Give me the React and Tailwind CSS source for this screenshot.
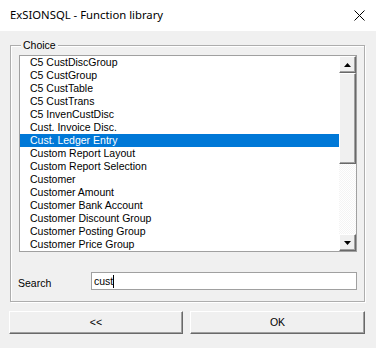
import { useState } from "react";

const items = [
  "C5 CustDiscGroup",
  "C5 CustGroup",
  "C5 CustTable",
  "C5 CustTrans",
  "C5 InvenCustDisc",
  "Cust. Invoice Disc.",
  "Cust. Ledger Entry",
  "Custom Report Layout",
  "Custom Report Selection",
  "Customer",
  "Customer Amount",
  "Customer Bank Account",
  "Customer Discount Group",
  "Customer Posting Group",
  "Customer Price Group",
];

const Arrow = ({ down }) => (
  <svg width="7" height="4" viewBox="0 0 7 4">
    {down ? <polygon points="0,0 7,0 3.5,4" fill="#000" /> : <polygon points="3.5,0 7,4 0,4" fill="#000" />}
  </svg>
);

const raised =
  "bg-[#f0f0f0] border border-t-white border-l-white border-r-[#696969] border-b-[#696969] shadow-[inset_-1px_-1px_0_#a0a0a0]";

const App = () => {
  const [selected, setSelected] = useState(6);
  const [search, setSearch] = useState("cust");

  return (
    <div className="w-[376px] h-[348px] bg-[#f0f0f0] flex flex-col font-['Liberation_Sans',Arial,sans-serif] text-[10.5px] text-black">
      {/* title bar */}
      <div className="h-[31px] bg-white flex items-center justify-between pl-[10px] pr-[11px]">
        <span className="font-['Noto_Sans',sans-serif] text-[11.3px]">ExSIONSQL - Function library</span>
        <svg width="11" height="11" viewBox="0 0 11 11">
          <path d="M0.5 0.5 L10.5 10.5 M10.5 0.5 L0.5 10.5" stroke="#000" strokeWidth="1" />
        </svg>
      </div>

      {/* group box */}
      <div className="mt-[14px] ml-[10px] w-[355px] h-[257px] border border-[#adadad] shadow-[inset_1px_1px_0_#fff,1px_1px_0_#fff] pl-[8px] flex flex-col items-start">
        <span className="-mt-[7px] ml-[2px] px-[2px] h-[12px] bg-[#f0f0f0] leading-[12px]">Choice</span>

        {/* list box */}
        <div className="mt-[4px] w-[338px] h-[197px] border border-[#a0a0a0] bg-white flex">
          <ul className="w-[319px]">
            {items.map((it, i) => (
              <li
                key={it}
                onClick={() => setSelected(i)}
                className={`h-[13px] leading-[13px] pl-[10px] whitespace-nowrap ${
                  i === selected ? "bg-[#0078d7] text-white" : ""
                }`}
              >
                {it}
              </li>
            ))}
          </ul>
          <div className="w-[17px] flex flex-col">
            <div className={`h-[17px] flex items-center justify-center ${raised}`}>
              <Arrow />
            </div>
            <div className={`h-[91px] ${raised}`} />
            <div className="h-[70px] bg-[repeating-conic-gradient(#f4f4f4_0_25%,#fff_0_50%)] bg-[length:2px_2px]" />
            <div className={`h-[17px] flex items-center justify-center ${raised}`}>
              <Arrow down />
            </div>
          </div>
        </div>

        {/* search row */}
        <div className="flex items-center mt-[19px] -ml-[8px]">
          <label className="w-[80px] pl-[7px] pt-[5px]">Search</label>
          <div className="w-[266px] h-[18px] border border-[#a0a0a0] bg-white flex items-start pl-[2px] pt-[2px]">
            <span className="leading-[13px]">{search}</span>
            <span className="w-px h-[13px] bg-black" />
          </div>
        </div>
      </div>

      {/* buttons */}
      <div className="flex gap-[7px] mt-[9px] ml-[9px]">
        <button className={`w-[174px] h-[23px] ${raised}`}>&lt;&lt;</button>
        <button className={`w-[175px] h-[23px] ${raised}`}>OK</button>
      </div>
    </div>
  );
};

export default App;
